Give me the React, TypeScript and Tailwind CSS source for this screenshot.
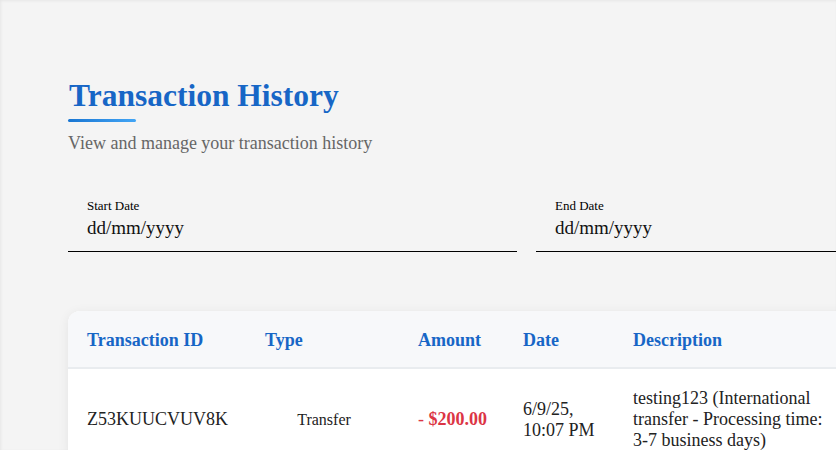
function DateField(props: any) {
  return (
    <div className="flex flex-col border-b border-black pb-[12px] pl-[19px]">
      <label className="text-[13px] leading-[16px] text-black">{props.label}</label>
      <span className="text-[19px] leading-[22px] mt-[3px] text-[#111]">dd/mm/yyyy</span>
    </div>
  );
}

function App() {
  const rows = [
    {
      id: "Z53KUUCVUV8K",
      type: "Transfer",
      amount: "$200.00",
      date: ["6/9/25,", "10:07 PM"],
      desc: "testing123 (International transfer - Processing time: 3-7 business days)",
    },
  ];

  return (
    <div
      className="w-[836px] h-[450px] overflow-hidden bg-[#f4f4f4] shadow-[inset_1px_1px_3px_rgba(0,0,0,0.06)]"
      style={{ fontFamily: '"Liberation Serif", "Times New Roman", serif' }}
    >
      <div className="w-[985px] pl-[68px] pt-[77px]">
        <h1 className="text-[31.5px] leading-[38px] font-bold text-[#1766c6] pl-[1px]">Transaction History</h1>
        <div className="w-[68px] h-[3px] mt-[4px] rounded-full bg-gradient-to-r from-[#1976d2] to-[#42a5f5]"></div>
        <p className="mt-[10px] text-[18px] leading-[22px] text-[#666]">View and manage your transaction history</p>

        <div className="grid grid-cols-2 gap-[19px] mt-[44px]">
          <DateField label="Start Date" />
          <DateField label="End Date" />
        </div>

        <div className="mt-[59px] w-[917px] bg-white rounded-[12px] shadow-[0_2px_12px_rgba(0,0,0,0.07)] overflow-hidden">
          <table className="w-full border-collapse table-fixed">
            <colgroup>
              <col className="w-[178px]" />
              <col className="w-[153px]" />
              <col className="w-[105px]" />
              <col className="w-[110px]" />
              <col className="w-[232px]" />
              <col />
            </colgroup>
            <thead>
              <tr className="bg-[#f7f8fa] border-b-2 border-[#e9ecef]">
                {["Transaction ID", "Type", "Amount", "Date", "Description", ""].map((h, i) => (
                  <th
                    key={i}
                    className="text-left pl-[19px] h-[57px] pt-[2px] text-[18px] font-bold text-[#1766c6]"
                  >
                    {h}
                  </th>
                ))}
              </tr>
            </thead>
            <tbody>
              {rows.map((r) => (
                <tr key={r.id}>
                  <td className="pl-[19px] pt-[19px] pb-[10px] text-[18px] text-[#222]">{r.id}</td>
                  <td className="text-center pl-[3px] pt-[19px] pb-[10px] text-[16px] text-[#222]">{r.type}</td>
                  <td className="pl-[19px] pt-[19px] pb-[10px] text-[18px] text-[#dc3545]">
                    - <span className="font-bold">{r.amount}</span>
                  </td>
                  <td className="pl-[19px] pt-[19px] pb-[10px] text-[18px] leading-[21px] text-[#222]">
                    {r.date[0]}
                    <br />
                    {r.date[1]}
                  </td>
                  <td className="pl-[19px] pr-[13px] pt-[19px] pb-[10px] text-[18px] leading-[21px] text-[#222]">
                    {r.desc}
                  </td>
                  <td></td>
                </tr>
              ))}
            </tbody>
          </table>
        </div>
      </div>
    </div>
  );
}

export default App;
